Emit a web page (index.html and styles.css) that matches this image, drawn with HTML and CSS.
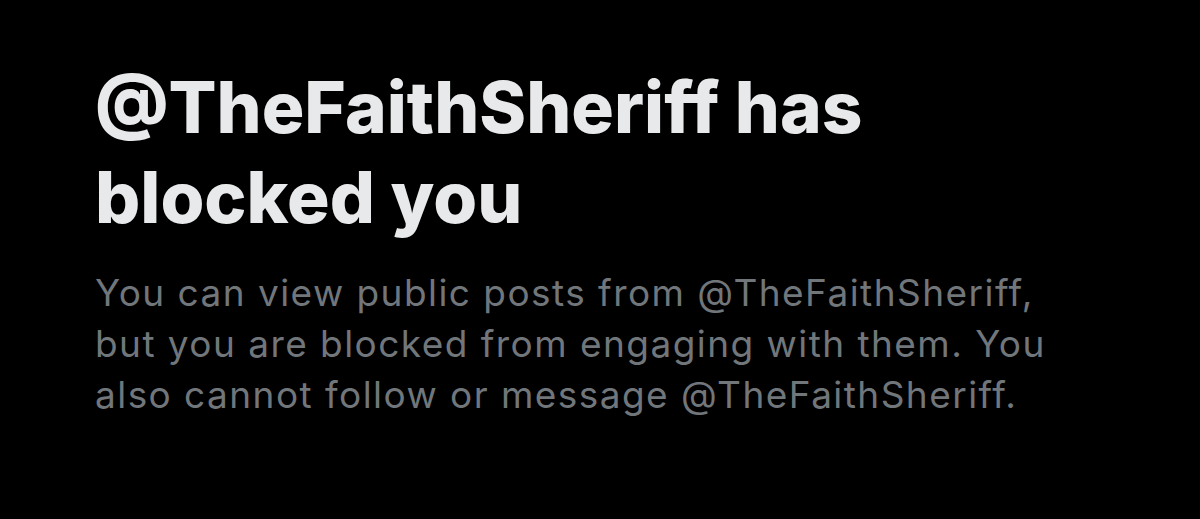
FILE: index.html
```html
<!DOCTYPE html>
<html lang="en">
<head>
    <meta charset="UTF-8">
    <meta name="viewport" content="width=device-width, initial-scale=1.0">
    <title>Blocked</title>
    <link rel="stylesheet" href="styles.css">
</head>
<body>

    <div class="blocked-container">
        <h1 class="blocked-title">@TheFaithSheriff has blocked you</h1>
        <p class="blocked-text">You can view public posts from @TheFaithSheriff, but you are blocked from engaging with them. You also cannot follow or message @TheFaithSheriff.</p>
    </div>

</body>
</html>
```

FILE: styles.css
```css
body {
    margin: 0;
    background-color: #000;
    font-family: Inter, "Noto Sans", sans-serif;
    overflow: hidden;
}
.blocked-container {
    padding: 62px 0 0 95px;
    width: 980px;
}
.blocked-title {
    margin: 0;
    font-size: 71px;
    font-weight: 800;
    line-height: 90px;
    color: #e7e9ea;
}
.blocked-text {
    margin: 25px 0 0;
    font-size: 37px;
    font-weight: 400;
    line-height: 51px;
    letter-spacing: 1.45px;
    color: #71767b;
}
```
